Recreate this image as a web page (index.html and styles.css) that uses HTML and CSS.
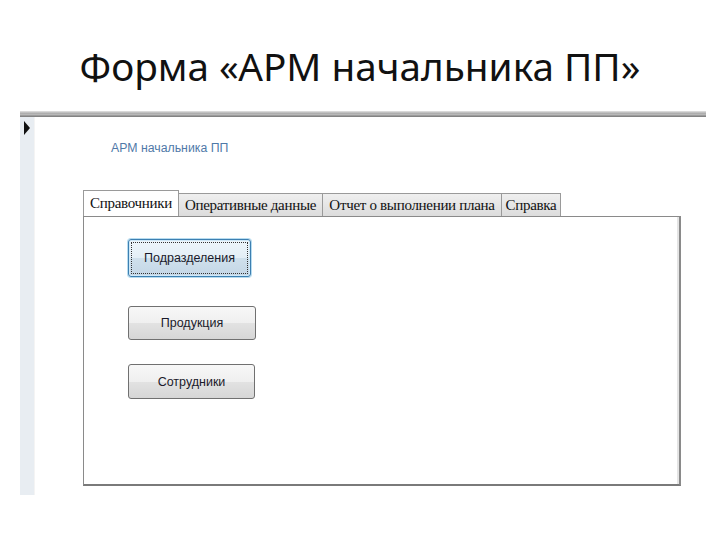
FILE: index.html
```html
<!DOCTYPE html>
<html lang="ru">
<head>
<meta charset="utf-8">
<link rel="stylesheet" href="styles.css">
</head>
<body>
<h1 class="title">Форма «АРМ начальника ПП»</h1>
<div class="window">
  <div class="topbar"></div>
  <div class="body">
    <div class="selector"><span class="arrow"></span></div>
    <div class="form">
      <div class="caption">АРМ начальника ПП</div>
      <div class="tabs">
        <div class="tab active t1">Справочники</div>
        <div class="tab t2">Оперативные данные</div>
        <div class="tab t3">Отчет о выполнении плана</div>
        <div class="tab t4">Справка</div>
      </div>
      <div class="panel">
        <button class="btn focus b1">Подразделения</button>
        <button class="btn b2">Продукция</button>
        <button class="btn b3">Сотрудники</button>
      </div>
    </div>
  </div>
</div>
</body>
</html>
```
FILE: styles.css
```css
html, body {
  margin: 0;
  padding: 0;
  background: #ffffff;
}
body {
  width: 720px;
  height: 540px;
  overflow: hidden;
}
.title {
  margin: 0;
  height: 111px;
  box-sizing: border-box;
  padding-top: 42px;
  text-align: center;
  font-family: "Noto Sans", sans-serif;
  font-weight: 400;
  font-size: 38.7px;
  line-height: 48px;
  color: #111111;
}
.window {
  margin-left: 20px;
  width: 686px;
}
.topbar {
  height: 6px;
  background: linear-gradient(#d8d8d8 0, #d8d8d8 1px, #a9a9a9 2px, #bdbdbd 4px, #7a7a7a 5px, #8c8c8c 6px);
}
.body {
  display: flex;
}
.selector {
  width: 14px;
  height: 378px;
  background: #e8edf2;
  border-right: 1px solid #f4f4f4;
  position: relative;
}
.arrow {
  position: absolute;
  left: 4px;
  top: 4px;
  width: 0;
  height: 0;
  border-top: 7px solid transparent;
  border-bottom: 7px solid transparent;
  border-left: 6px solid #111111;
}
.form {
  flex: 1;
  padding-left: 48px;
}
.caption {
  margin-top: 24px;
  margin-left: 28px;
  font-family: "Liberation Sans", sans-serif;
  font-size: 12.3px;
  line-height: 14px;
  color: #4f79a8;
  height: 14px;
}
.tabs {
  margin-top: 35px;
  display: flex;
  align-items: flex-end;
  height: 26px;
}
.tab {
  box-sizing: border-box;
  height: 23px;
  border: 1px solid #9a9a9a;
  border-bottom: none;
  border-left: none;
  background: linear-gradient(#efefef, #dcdcdc);
  font-family: "Liberation Serif", serif;
  font-size: 15px;
  line-height: 22px;
  color: #111111;
  text-align: center;
  white-space: nowrap;
  letter-spacing: -0.3px;
}
.tab.active {
  height: 26px;
  background: #ffffff;
  border-left: 1px solid #9a9a9a;
  line-height: 24px;
}
.t1 { width: 96px; }
.t2 { width: 144px; }
.t3 { width: 179px; }
.t4 { width: 59px; }
.panel {
  box-sizing: border-box;
  width: 598px;
  height: 270px;
  border: 1px solid #8a8a8a;
  border-right: 2px solid #8a8a8a;
  border-bottom: 2px solid #7a7a7a;
  box-shadow: inset -2px 0 0 #e4e4e4;
  display: flex;
  flex-direction: column;
  align-items: flex-start;
  padding-left: 44px;
  padding-top: 22px;
}
.btn {
  box-sizing: border-box;
  margin: 0;
  border: 1px solid #707070;
  border-radius: 3px;
  background: linear-gradient(#f7f7f7 0%, #efefef 50%, #e2e2e2 51%, #d6d6d6 100%);
  font-family: "Liberation Sans", sans-serif;
  font-size: 12.5px;
  color: #1a1a2a;
  padding: 0;
  text-align: center;
}
.btn.focus {
  border: 1px solid #3c7fb1;
  box-shadow: 0 0 0 1px #b7dcf0, inset 0 0 0 1px #cfe8f7;
  outline: 1px dotted #333;
  outline-offset: -4px;
  background: linear-gradient(#eef6fb 0%, #e3eef6 50%, #cfe0ec 51%, #c4d7e6 100%);
}
.b1 { width: 123px; height: 38px; }
.b2 { width: 128px; height: 34px; margin-top: 29px; }
.b3 { width: 127px; height: 35px; margin-top: 24px; }
```
